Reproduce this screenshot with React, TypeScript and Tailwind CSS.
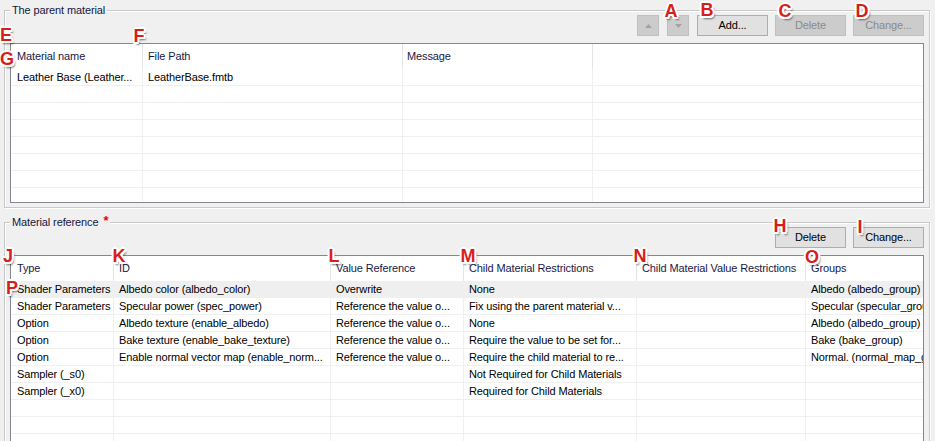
import React from "react";

const marks: { c: string; p: string }[] = [
  { c: "A", p: "left-[671px] top-[11px]" },
  { c: "B", p: "left-[707px] top-[10px]" },
  { c: "C", p: "left-[785px] top-[11px]" },
  { c: "D", p: "left-[862px] top-[11px]" },
  { c: "E", p: "left-[6px] top-[35px]" },
  { c: "F", p: "left-[139px] top-[36px]" },
  { c: "G", p: "left-[7px] top-[59px]" },
  { c: "H", p: "left-[780px] top-[226px]" },
  { c: "I", p: "left-[860px] top-[227px]" },
  { c: "J", p: "left-[8px] top-[256px]" },
  { c: "K", p: "left-[119px] top-[256px]" },
  { c: "L", p: "left-[334px] top-[256px]" },
  { c: "M", p: "left-[468px] top-[256px]" },
  { c: "N", p: "left-[640px] top-[256px]" },
  { c: "O", p: "left-[812px] top-[257px]" },
  { c: "P", p: "left-[12px] top-[288px]" },
];

function Btn({ label, disabled }: { label: string; disabled?: boolean }) {
  return (
    <div
      className={
        "h-[21px] w-[71px] border flex items-center justify-center leading-none " +
        (disabled
          ? "bg-[#cccccc] border-[#bfbfbf] text-[#8a8a8a]"
          : "bg-[#e1e1e1] border-[#adadad] text-black")
      }
    >
      {label}
    </div>
  );
}

function ArrowBtn({ up }: { up?: boolean }) {
  return (
    <div className="h-[21px] w-[22px] border border-[#bfbfbf] bg-[#cccccc] flex items-center justify-center">
      <svg width="7" height="4" viewBox="0 0 7 4">
        {up ? (
          <polygon points="3.5,0 7,4 0,4" fill="#a3a3a3" />
        ) : (
          <polygon points="0,0 7,0 3.5,4" fill="#a3a3a3" />
        )}
      </svg>
    </div>
  );
}

function Group({
  title,
  star,
  className,
  children,
}: {
  title: string;
  star?: boolean;
  className: string;
  children: React.ReactNode;
}) {
  return (
    <div
      className={
        "relative ml-[4px] w-[926px] border border-[#c8c8c8] shadow-[inset_1px_1px_0_#ffffff,1px_1px_0_#ffffff] px-[5px] pt-[4px] pb-[4px] flex flex-col " +
        className
      }
    >
      <div className="absolute left-[5px] top-[-8px] px-[2px] bg-[#f0f0f0] leading-[14px] text-[#16163a] flex items-start">
        <span>{title}</span>
        {star && (
          <span className="ml-[5px] text-[#ee0000] font-bold text-[13px] leading-[12px]">*</span>
        )}
      </div>
      {children}
    </div>
  );
}

const topCols = ["w-[132px] pl-[6px]", "w-[260px] pl-[5px]", "w-[190px] pl-[4px]", "flex-1 pl-[5px]"];
const topHead = ["Material name", "File Path", "Message", ""];
const topRows: string[][] = [["Leather Base (Leather...", "LeatherBase.fmtb", "", ""]];

const botCols = [
  "w-[103px] pl-[6px]",
  "w-[217px] pl-[5px]",
  "w-[133px] pl-[5px]",
  "w-[173px] pl-[5px]",
  "w-[169px] pl-[5px]",
  "flex-1 pl-[5px]",
];
const botHead = [
  "Type",
  "ID",
  "Value Reference",
  "Child Material Restrictions",
  "Child Material Value Restrictions",
  "Groups",
];
const botRows: string[][] = [
  ["Shader Parameters", "Albedo color (albedo_color)", "Overwrite", "None", "", "Albedo (albedo_group)"],
  ["Shader Parameters", "Specular power (spec_power)", "Reference the value o...", "Fix using the parent material v...", "", "Specular (specular_group)"],
  ["Option", "Albedo texture (enable_albedo)", "Reference the value o...", "None", "", "Albedo (albedo_group)"],
  ["Option", "Bake texture (enable_bake_texture)", "Reference the value o...", "Require the value to be set for...", "", "Bake (bake_group)"],
  ["Option", "Enable normal vector map (enable_norm...", "Reference the value o...", "Require the child material to re...", "", "Normal. (normal_map_group)"],
  ["Sampler (_s0)", "", "", "Not Required for Child Materials", "", ""],
  ["Sampler (_x0)", "", "", "Required for Child Materials", "", ""],
];

function Table({
  cols,
  head,
  rows,
  total,
  className,
  highlightFirst,
}: {
  cols: string[];
  head: string[];
  rows: string[][];
  total: number;
  className: string;
  highlightFirst?: boolean;
}) {
  const all: string[][] = [];
  for (let i = 0; i < total; i++) all.push(rows[i] ?? cols.map(() => ""));
  return (
    <div className={"mt-[7px] border border-[#828790] bg-white overflow-hidden flex flex-col " + className}>
      <div className="flex h-[25px] shrink-0">
        {head.map((h, i) => (
          <div
            key={i}
            className={
              cols[i] +
              " h-full flex items-center whitespace-nowrap overflow-hidden text-[#191946] " +
              (i < head.length - 1 ? "border-r border-[#e5e5e5]" : "")
            }
          >
            {h}
          </div>
        ))}
      </div>
      {all.map((r, ri) => (
        <div
          key={ri}
          className={
            "flex h-[17px] shrink-0 border-b border-[#f0f0f0] " +
            (highlightFirst && ri === 0 ? "bg-[#efefef]" : "")
          }
        >
          {r.map((c, ci) => (
            <div
              key={ci}
              className={
                cols[ci] +
                " h-full flex items-center whitespace-nowrap overflow-hidden text-black " +
                (ci < r.length - 1 ? "border-r border-[#f0f0f0]" : "")
              }
            >
              {c}
            </div>
          ))}
        </div>
      ))}
    </div>
  );
}

export default function App() {
  return (
    <div className="relative w-[935px] h-[441px] overflow-hidden bg-[#f0f0f0] font-['Liberation_Sans',Arial,sans-serif] text-[11px] tracking-[-0.12px]">
      <div className="pt-[10px] flex flex-col">
        <Group title="The parent material" className="h-[198px]">
          <div className="flex justify-end gap-[8px]">
            <div className="flex gap-[8px]">
              <ArrowBtn up />
              <ArrowBtn />
            </div>
            <div className="flex gap-[7px]">
              <Btn label="Add..." />
              <Btn label="Delete" disabled />
              <Btn label="Change..." disabled />
            </div>
          </div>
          <Table cols={topCols} head={topHead} rows={topRows} total={9} className="h-[160px] shrink-0" />
        </Group>
        <div className="h-[14px]" />
        <Group title="Material reference" star className="h-[260px]">
          <div className="flex justify-end gap-[7px]">
            <Btn label="Delete" />
            <Btn label="Change..." />
          </div>
          <Table
            cols={botCols}
            head={botHead}
            rows={botRows}
            total={10}
            className="h-[200px] shrink-0"
            highlightFirst
          />
        </Group>
      </div>
      {marks.map((m) => (
        <span
          key={m.c}
          className={
            "absolute " +
            m.p +
            " -translate-x-1/2 -translate-y-1/2 font-bold text-[18px] leading-none tracking-normal text-[#d61f1c] [text-shadow:-1.5px_-1.5px_0_#fff,1.5px_-1.5px_0_#fff,-1.5px_1.5px_0_#fff,1.5px_1.5px_0_#fff,0_-2px_0_#fff,0_2px_0_#fff,-2px_0_0_#fff,2px_0_0_#fff,2px_3px_2px_rgba(0,0,0,0.55)]"
          }
        >
          {m.c}
        </span>
      ))}
    </div>
  );
}
